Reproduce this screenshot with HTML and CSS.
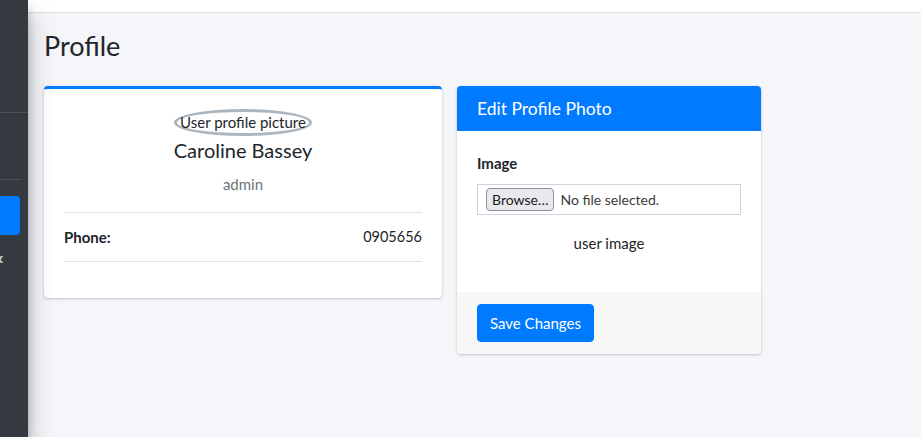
FILE: index.html
```html
<!DOCTYPE html>
<html>
<head>
<meta charset="utf-8">
<link rel="stylesheet" href="styles.css">
</head>
<body>
<div class="wrapper">
  <aside class="sidebar">
    <div class="brand"></div>
    <div class="user-panel"></div>
    <div class="nav-active"></div>
    <div class="nav-x">x</div>
  </aside>
  <div class="main">
    <nav class="navbar"></nav>
    <section class="content-header">
      <h1 class="page-title">Profile</h1>
    </section>
    <section class="content">
      <div class="card card-outline profile-card">
        <div class="card-body">
          <div class="avatar-wrap"><span class="avatar-alt">User profile picture</span></div>
          <h3 class="profile-username">Caroline Bassey</h3>
          <p class="text-muted">admin</p>
          <ul class="list-group">
            <li class="list-item"><b>Phone:</b><span>0905656</span></li>
          </ul>
        </div>
      </div>
      <div class="card photo-card">
        <div class="card-header"><h3 class="card-title">Edit Profile Photo</h3></div>
        <div class="card-body photo-body">
          <div class="form-group">
            <label class="form-label">Image</label>
            <div class="file-input"><span class="file-btn">Browse…</span><span class="file-text">No file selected.</span></div>
          </div>
          <div class="user-image">user image</div>
        </div>
        <div class="card-footer"><button class="btn-primary">Save Changes</button></div>
      </div>
    </section>
  </div>
</div>
</body>
</html>
```
FILE: styles.css
```css
* { box-sizing: border-box; }
html, body { margin: 0; padding: 0; }
body {
  font-family: "Lato", "Liberation Sans", sans-serif;
  font-size: 16px;
  line-height: 1.5;
  color: #212529;
  background: #f4f6f9;
  width: 921px;
  height: 437px;
  overflow: hidden;
}
.wrapper { display: flex; height: 437px; }
.sidebar {
  width: 28px;
  flex: none;
  background: #343a40;
  box-shadow: 0 14px 28px rgba(0,0,0,.25), 0 10px 10px rgba(0,0,0,.22);
  position: relative;
  z-index: 2;
  display: flex;
  flex-direction: column;
  overflow: hidden;
}
.brand { height: 113px; border-bottom: 1px solid #4b545c; }
.user-panel { height: 67px; width: 20px; border-bottom: 1px solid #4b545c; }
.nav-active {
  margin-top: 16px;
  width: 20px;
  height: 39px;
  background: #007bff;
  border-radius: 0 4px 4px 0;
}
.nav-x {
  margin-top: 16px;
  margin-left: -5px;
  color: #c2c7d0;
  font-family: "DejaVu Sans", sans-serif;
  font-weight: bold;
  font-size: 13px;
  line-height: 16px;
}
.main { flex: 1; display: flex; flex-direction: column; }
.navbar { height: 13px; background: #fff; border-bottom: 1px solid #dee2e6; flex: none; }
.content-header { padding: 17px 16px 14px; }
.page-title { margin: 0; font-size: 27px; font-weight: 400; line-height: 1.2; }
.content { display: flex; align-items: flex-start; gap: 15px; padding: 10px 16px 0; }
.card {
  background: #fff;
  border-radius: 4px;
  box-shadow: 0 0 1px rgba(0,0,0,.125), 0 1px 3px rgba(0,0,0,.2);
  overflow: hidden;
}
.card-outline { border-top: 3px solid #007bff; }
.profile-card { width: 398px; }
.photo-card { width: 304px; }
.card-body { padding: 20px; }
.avatar-wrap { text-align: center; height: 27px; }
.avatar-alt {
  display: inline-block;
  border: 3px solid #adb5bd;
  border-radius: 50%;
  padding: 0 3px;
  font-size: 15px;
  line-height: 21px;
}
.profile-username { margin: 2px 0 0; font-size: 20px; font-weight: 400; text-align: center; line-height: 1.2; }
.text-muted { color: #6c757d; text-align: center; margin: 11px 0 16px; font-size: 15px; }
.list-group { list-style: none; margin: 0 0 16px; padding: 0; }
.list-item {
  display: flex;
  justify-content: space-between;
  padding: 12px 0;
  border-top: 1px solid #dee2e6;
  border-bottom: 1px solid #dee2e6;
  font-size: 15px;
  line-height: 24px;
}
.list-item span { font-size: 14.5px; }
.card-header { background: #007bff; color: #fff; padding: 12px 20px; }
.card-title { margin: 0; font-size: 17.5px; font-weight: 400; line-height: 21px; }
.photo-body { padding-top: 21px; }
.form-group { margin-bottom: 17px; }
.form-label { display: block; font-weight: 700; margin-bottom: 9px; font-size: 15px; }
.file-input {
  height: 31px;
  border: 1px solid #ced4da;
  display: flex;
  align-items: center;
  padding-left: 8px;
  gap: 6px;
  font-size: 14px;
}
.file-btn {
  border: 1px solid #8f8f9d;
  background: #e9e9ed;
  border-radius: 4px;
  padding: 0 5px;
  line-height: 21px;
  color: #1b1b1b;
}
.file-text { color: #3b3b3b; }
.user-image { text-align: center; font-size: 15px; margin-bottom: 18px; }
.card-footer { background: #f7f7f7; padding: 12px 20px; }
.btn-primary {
  font-family: inherit;
  background: #007bff;
  color: #fff;
  border: 1px solid #007bff;
  border-radius: 4px;
  padding: 6px 12px;
  font-size: 15px;
  line-height: 24px;
}
```
